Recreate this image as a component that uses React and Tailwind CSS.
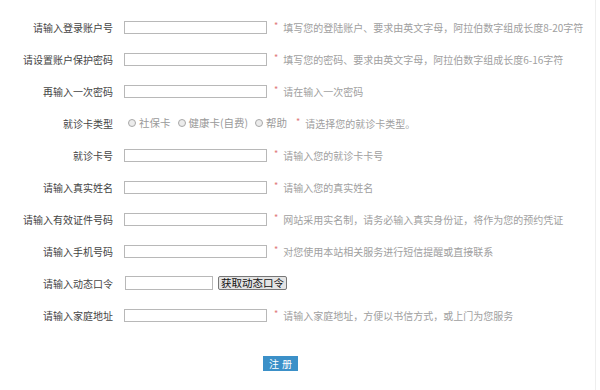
import React from 'react';

const font = { fontFamily: '"Noto Sans CJK SC", "Noto Sans", sans-serif' };

const rows = [
  { label: '请输入登录账户号', hint: '填写您的登陆账户、要求由英文字母，阿拉伯数字组成长度8-20字符' },
  { label: '请设置账户保护密码', hint: '填写您的密码、要求由英文字母，阿拉伯数字组成长度6-16字符' },
  { label: '再输入一次密码', hint: '请在输入一次密码' },
  { label: '就诊卡类型', type: 'radio', hint: '请选择您的就诊卡类型。' },
  { label: '就诊卡号', hint: '请输入您的就诊卡卡号' },
  { label: '请输入真实姓名', hint: '请输入您的真实姓名' },
  { label: '请输入有效证件号码', hint: '网站采用实名制，请务必输入真实身份证，将作为您的预约凭证' },
  { label: '请输入手机号码', hint: '对您使用本站相关服务进行短信提醒或直接联系' },
  { label: '请输入动态口令', type: 'code' },
  { label: '请输入家庭地址', hint: '请输入家庭地址，方便以书信方式，或上门为您服务' },
];

const Radio = ({ text }) => (
  <label className="flex items-center text-[10.5px] text-[#9a9a9a]">
    <span className="w-[8px] h-[8px] rounded-full border border-[#a8a8a8] bg-[#ececec] mr-[3px]" />
    {text}
  </label>
);

const Hint = ({ text, ml = 'ml-[7px]' }) => (
  <div className={`flex items-center ${ml} text-[10px] text-[#a0a0a0]`}>
    <span className="text-[#e07a7a] mr-[5px] text-[9px] -mt-[2px]">*</span>
    {text}
  </div>
);

export default function App() {
  return (
    <div className="w-[600px] h-[390px] bg-white flex" style={font}>
      <div className="w-[596px] border-r border-[#eeeeee] pt-[11px]">
        {rows.map((r) => (
          <div key={r.label} className="h-[32px] flex items-center">
            <div className="w-[113px] text-right text-[10px] text-[#444]">{r.label}</div>
            {r.type === 'radio' ? (
              <div className="flex items-center ml-[15px] gap-[7px]">
                <Radio text="社保卡" />
                <Radio text="健康卡(自费)" />
                <Radio text="帮助" />
                <Hint text={r.hint} ml="ml-[2px]" />
              </div>
            ) : r.type === 'code' ? (
              <div className="flex items-center ml-[12px]">
                <div className="w-[88px] h-[14px] border border-[#b8b8b8] bg-white" />
                <button className="ml-[5px] h-[14px] px-[2px] border border-[#777] rounded-[2px] bg-[#e4e4e4] text-[10.5px] leading-[12px] text-[#111]">
                  获取动态口令
                </button>
              </div>
            ) : (
              <div className="flex items-center ml-[11px]">
                <div className="w-[143px] h-[13px] border border-[#b8b8b8] bg-white" />
                <Hint text={r.hint} />
              </div>
            )}
          </div>
        ))}
        <div className="flex pl-[263px] pt-[25px]">
          <button className="w-[35px] h-[15px] bg-[#3b90c8] text-white text-[10px] leading-[15px] tracking-[3px] pl-[3px]">
            注册
          </button>
        </div>
      </div>
    </div>
  );
}
